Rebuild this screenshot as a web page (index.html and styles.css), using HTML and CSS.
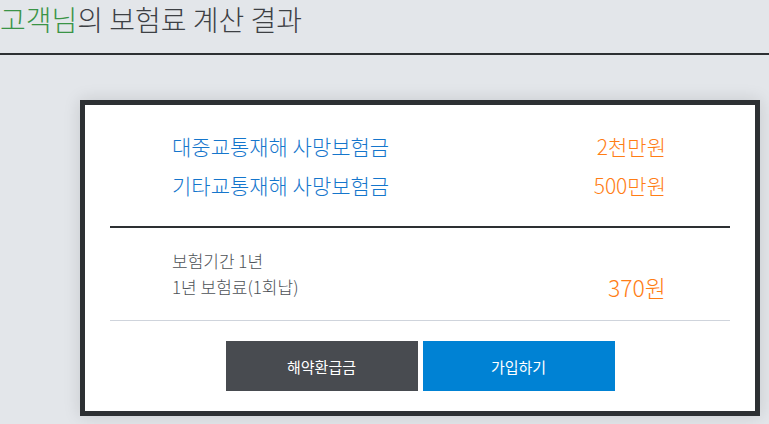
FILE: index.html
```html
<html>
    <head>
        <meta charset="utf-8" />
        <title>보험료 계산 결과</title>
        <link rel="stylesheet" href="styles.css">
    </head>
    <body>
        <div class="page-head">
            <h1 class="title"><span class="customer">고객님</span>의 보험료 계산 결과</h1>
        </div>

        <div class="result">
            <div class="coverage">
                <div class="coverage-row">
                    <span class="coverage-name">대중교통재해 사망보험금</span>
                    <span class="amount">2천만원</span>
                </div>
                <div class="coverage-row">
                    <span class="coverage-name">기타교통재해 사망보험금</span>
                    <span class="amount">500만원</span>
                </div>
            </div>

            <div class="premium">
                <div class="premium-info">
                    <p>보험기간 1년</p>
                    <p>1년 보험료(1회납)</p>
                </div>
                <span class="amount premium-amount">370원</span>
            </div>

            <div class="actions">
                <button class="btn btn-refund">해약환급금</button>
                <button class="btn btn-join">가입하기</button>
            </div>
        </div>
    </body>
</html>
```

FILE: styles.css
```css
html {
    background: #e3e6ea;
}

body, html {
    margin: 0;
    padding: 0;
    font-family: "Noto Sans CJK KR", "Noto Sans", sans-serif;
}

.page-head {
    height: 53px;
    border-bottom: 2px solid #2d3033;
}

.title {
    margin: 0;
    font-size: 28px;
    font-weight: 300;
    line-height: 38px;
    color: #3d4044;
}

.customer {
    color: #3a9446;
}

.result {
    margin: 45px 0 0 80px;
    border: 5px solid #2d3033;
    background: #fff;
    box-shadow: 0 0 16px rgba(0,0,0,0.13);
    padding: 0 25px;
    width: 620px;
}

.coverage {
    padding: 22px 0 21px;
    border-bottom: 2px solid #2d3033;
}

.coverage-row {
    display: flex;
    justify-content: space-between;
    padding: 0 64px 0 62px;
    line-height: 39px;
    font-size: 21px;
    font-weight: 300;
}

.coverage-name {
    color: #1576cc;
}

.amount {
    color: #ff7d15;
    font-size: 21px;
    font-weight: 300;
}

.premium {
    display: flex;
    justify-content: space-between;
    align-items: flex-end;
    padding: 20px 64px 20px 62px;
    border-bottom: 1px solid #cfd4dc;
}

.premium-info p {
    margin: 0;
    font-size: 17px;
    font-weight: 300;
    line-height: 26px;
    color: #4d5257;
}

.premium-amount {
    font-size: 23px;
    line-height: 26px;
}

.actions {
    display: flex;
    justify-content: center;
    gap: 5px;
    padding: 20px 0;
}

.btn {
    width: 192px;
    height: 50px;
    border: 0;
    font-family: inherit;
    font-size: 15px;
    color: #fff;
    cursor: pointer;
}

.btn-refund {
    background: #484b50;
}

.btn-join {
    background: #0082d4;
}
```
